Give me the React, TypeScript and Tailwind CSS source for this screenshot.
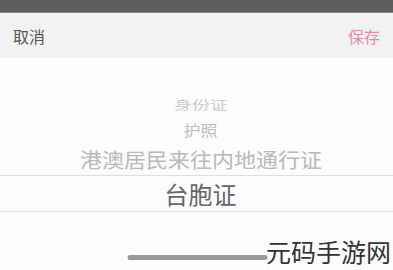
export default function App() {
  return (
    <div
      className="relative h-[270px] w-[393px] overflow-hidden bg-[#fcfcfc]"
      style={{ fontFamily: '"Noto Sans CJK SC", "Noto Sans", sans-serif' }}
    >
      <div className="h-[12px] bg-[#5e5e5e]" />
      <div className="flex h-[46px] items-center justify-between border-t border-[#8a8a8a] bg-[#f2f2f2] px-[13px]">
        <span className="text-[16px] leading-none text-[#555]">取消</span>
        <span className="text-[16px] leading-none text-[#e58aa8]">保存</span>
      </div>

      <div className="flex flex-col items-center">
        <div className="h-[36px]" />
        <div className="flex h-[22px] items-center justify-center pl-[9px]">
          <span className="scale-y-[0.68] text-[18px] leading-none text-[#cacaca]">身份证</span>
        </div>
        <div className="flex h-[26px] items-center justify-center pl-[8px]">
          <span className="scale-y-[0.88] text-[17px] leading-none text-[#bdbdbd]">护照</span>
        </div>
        <div className="flex h-[33px] items-center justify-center pl-[9px]">
          <span className="scale-y-[0.92] text-[22px] leading-none text-[#b9b9b9]">港澳居民来往内地通行证</span>
        </div>
        <div className="flex h-[37px] w-full items-center justify-center border-y border-[#dedede] pl-[8px]">
          <span className="text-[24px] leading-none text-[#666]">台胞证</span>
        </div>
        <div className="h-[43px]" />
        <div className="h-[5px] w-[140px] translate-x-[0.5px] rounded-full bg-[#9a9a9a]" />
      </div>

      <div className="absolute bottom-[6px] left-[266px] whitespace-nowrap text-[25px] leading-none text-[#333]">
        元码手游网
      </div>
    </div>
  );
}
